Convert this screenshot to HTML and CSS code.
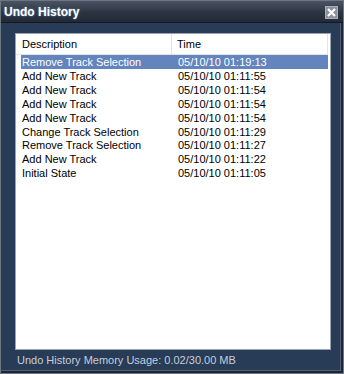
FILE: index.html
```html
<!doctype html>
<html>
<head>
    <meta charset="utf-8" />
    <title>Undo History</title>
    <link rel="stylesheet" href="styles.css">
</head>
<body>
    <div class="Window">
        <div class="TitleBar">
            <span class="TitleBar_text">Undo History</span>
            <span class="TitleBar_close">
                <svg width="9" height="9" viewBox="0 0 9 9"><path d="M1 1L8 8M8 1L1 8" stroke="#fff" stroke-width="2.2" /></svg>
            </span>
        </div>
        <div class="Body">
            <div class="List">
                <div class="List_header">
                    <span class="Col Col_desc">Description</span>
                    <span class="Col Col_time">Time</span>
                </div>
                <div class="List_rows">
                    <div class="Row _selected"><span class="Col_desc">Remove Track Selection</span><span class="Col_time">05/10/10 01:19:13</span></div>
                    <div class="Row"><span class="Col_desc">Add New Track</span><span class="Col_time">05/10/10 01:11:55</span></div>
                    <div class="Row"><span class="Col_desc">Add New Track</span><span class="Col_time">05/10/10 01:11:54</span></div>
                    <div class="Row"><span class="Col_desc">Add New Track</span><span class="Col_time">05/10/10 01:11:54</span></div>
                    <div class="Row"><span class="Col_desc">Add New Track</span><span class="Col_time">05/10/10 01:11:54</span></div>
                    <div class="Row"><span class="Col_desc">Change Track Selection</span><span class="Col_time">05/10/10 01:11:29</span></div>
                    <div class="Row"><span class="Col_desc">Remove Track Selection</span><span class="Col_time">05/10/10 01:11:27</span></div>
                    <div class="Row"><span class="Col_desc">Add New Track</span><span class="Col_time">05/10/10 01:11:22</span></div>
                    <div class="Row"><span class="Col_desc">Initial State</span><span class="Col_time">05/10/10 01:11:05</span></div>
                </div>
            </div>
            <div class="Footer">Undo History Memory Usage: 0.02/30.00 MB</div>
        </div>
    </div>
</body>
</html>
```

FILE: styles.css
```css
html, body {
    margin: 0;
    padding: 0;
    background: #283c58;
}
.Window {
    width: 344px;
    height: 374px;
    box-sizing: border-box;
    border: 1px solid #6e7682;
    background: #283c58;
    box-shadow: inset -2px -2px 0 0 #1c2636, inset -3px -3px 0 0 #56606e;
    display: flex;
    flex-direction: column;
    font-family: "Liberation Sans", Arial, sans-serif;
    font-size: 11px;
}
.TitleBar {
    height: 21px;
    flex: none;
    display: flex;
    align-items: center;
    justify-content: space-between;
    padding: 0 5px 0 3px;
    background: linear-gradient(#4b5464, #2c3442 55%, #222a37);
    border-bottom: 1px solid #121924;
}
.TitleBar_text {
    color: #fff;
    font-weight: bold;
    font-size: 12px;
    text-shadow: 0 0 2px #6f9ad0;
}
.TitleBar_close {
    width: 11px;
    height: 11px;
    background: #8a919c;
    border: 1px solid #a9afb8;
    display: flex;
    align-items: center;
    justify-content: center;
    margin-top: 1px;
}
.Body {
    flex: 1;
    display: flex;
    flex-direction: column;
    padding: 10px 12px 0 14px;
}
.List {
    height: 317px;
    box-sizing: border-box;
    background: #fff;
    border: 1px solid #9aa3ae;
}
.List_header {
    display: flex;
    height: 20px;
    align-items: center;
    margin-right: 2px;
    border-bottom: 1px solid #e3e3e3;
    border-right: 1px solid #e3e3e3;
    color: #000;
}
.Col_desc {
    width: 156px;
    padding-left: 1px;
    flex: none;
}
.List_header .Col_desc {
    padding-left: 6px;
    width: 149px;
    height: 20px;
    line-height: 20px;
    border-right: 1px solid #e3e3e3;
}
.List_header .Col_time {
    padding-left: 5px;
}
.List_rows {
    padding: 0 2px 0 5px;
}
.Row {
    display: flex;
    height: 13.875px;
    line-height: 14px;
    color: #000;
}
.Row._selected {
    height: 14px;
    background: #6384bd;
    color: #fff;
}
.Footer {
    color: #c5ceda;
    padding: 3px 0 0 2px;
    line-height: 14px;
}
```
